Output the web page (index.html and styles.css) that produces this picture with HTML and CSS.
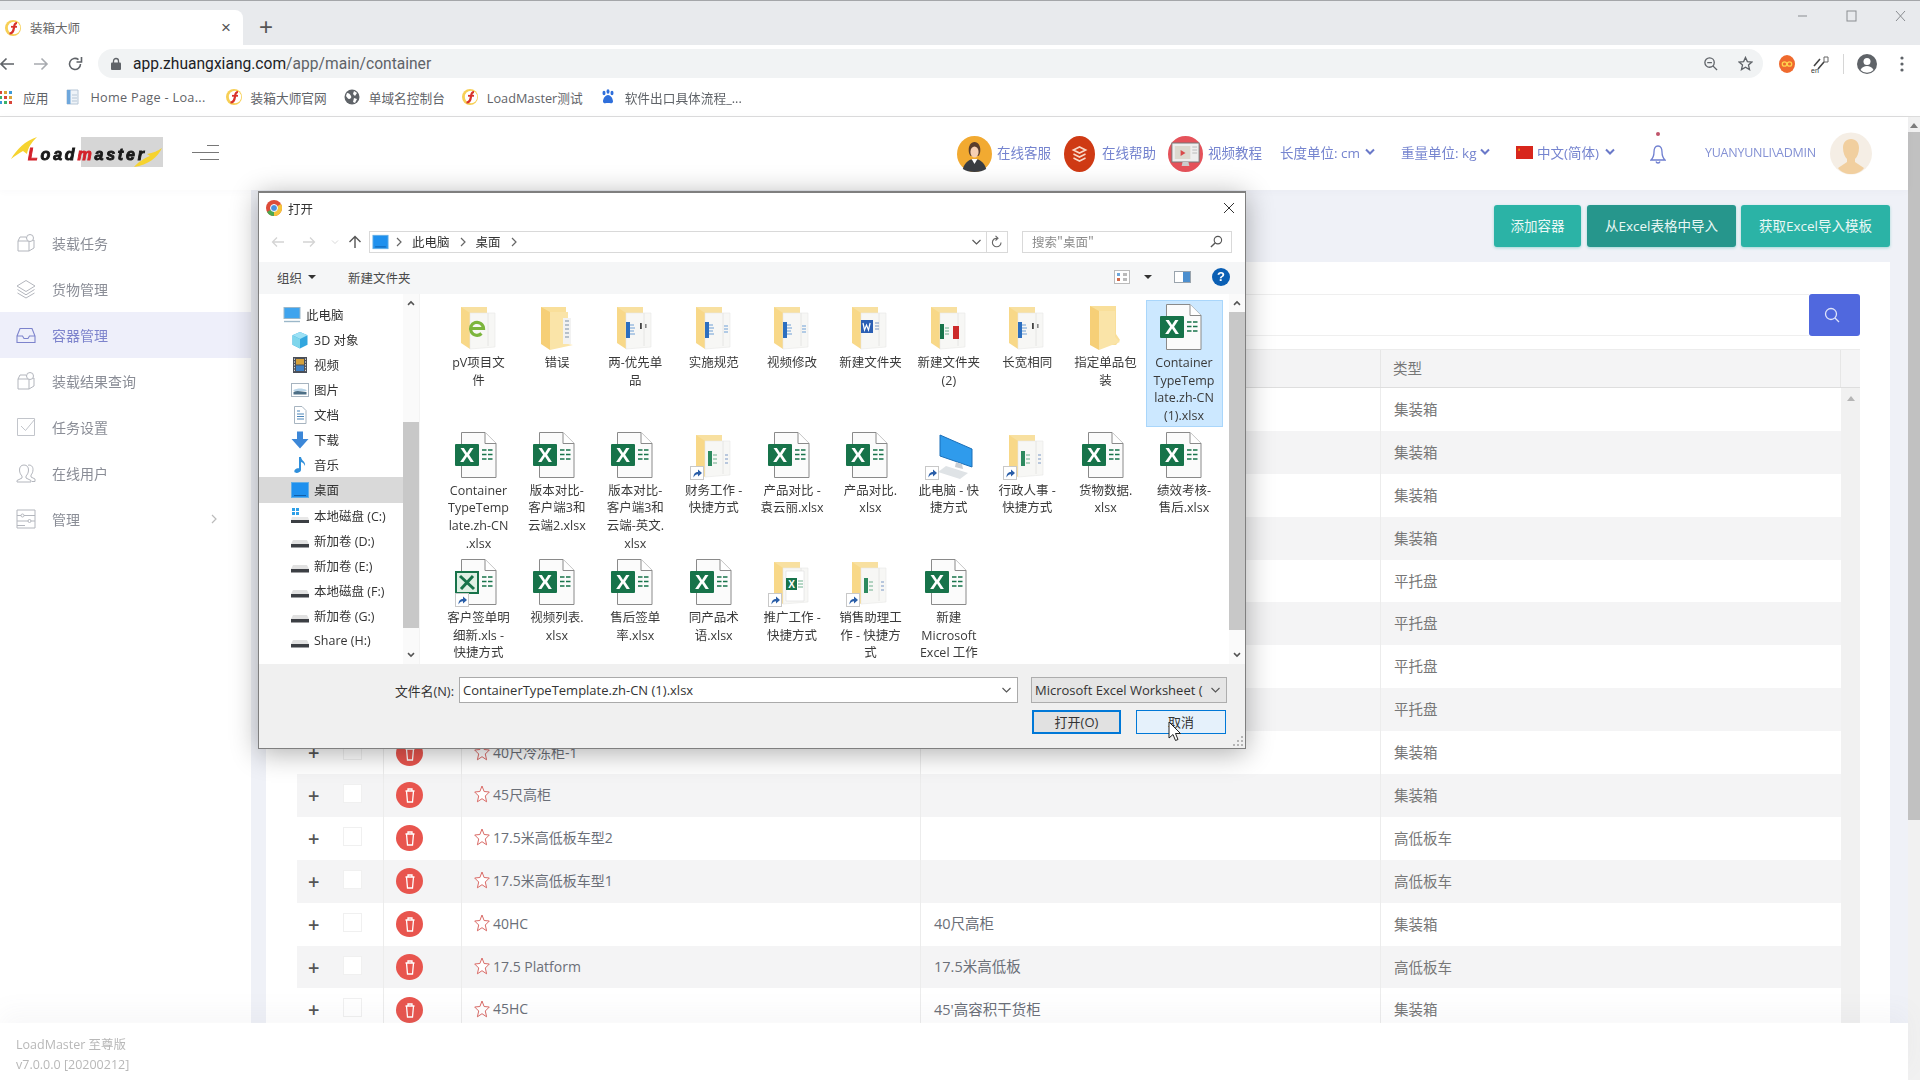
FILE: index.html
```html
<!DOCTYPE html>
<html lang="zh-CN">
<head>
<meta charset="utf-8">
<title>装箱大师</title>
<link rel="stylesheet" href="styles.css">
</head>
<body>
<svg class="defs" width="0" height="0" aria-hidden="true">
  <defs>
    <symbol id="fav" viewBox="0 0 16 16"><circle cx="8" cy="8" r="8" fill="#f7cf55"/><circle cx="9" cy="8" r="6.200" fill="#fff"/><path d="M12 3C9.300 3 9.300 5 9 7.500 8.600 11 7.500 13.500 4.500 13.500" fill="none" stroke="#d8322a" stroke-width="2.200"/><path d="M6 6.800h6" stroke="#d8322a" stroke-width="1.800"/></symbol>
    <symbol id="excel" viewBox="0 0 48 48"><path d="M6.500.5H30L41 11.500V45.500H6.500Z" fill="#fbfbfb" stroke="#8a8a8a"/><path d="M30 .5V11.500H41" fill="#fff" stroke="#8a8a8a"/><rect y="12" width="24" height="22" rx="1" fill="#17734a"/><text x="12" y="30" class="xl-x">X</text><path d="M27 18h4.500M33 18h4.500M27 22.500h4.500M33 22.500h4.500M27 27h4.500M33 27h4.500" stroke="#17734a" stroke-width="1.700"/></symbol>
    <symbol id="xls-old" viewBox="0 0 48 48"><path d="M6.500.5H30L41 11.500V45.500H6.500Z" fill="#fbfbfb" stroke="#8a8a8a"/><path d="M30 .5V11.500H41" fill="#fff" stroke="#8a8a8a"/><rect x="1" y="13" width="22" height="21" fill="#dff0e4" stroke="#17734a" stroke-width="2"/><path d="M5 17l14 13M18 17L6 30" stroke="#17734a" stroke-width="3"/><path d="M27 18h4.500M33 18h4.500M27 22.500h4.500M33 22.500h4.500M27 27h4.500M33 27h4.500" stroke="#17734a" stroke-width="1.700"/></symbol>
    <symbol id="folder" viewBox="0 0 48 48"><path d="M6 3H32V12H6Z" fill="#f8e0a0"/><path d="M6 3L15 9V45L6 39Z" fill="#f8d888"/><path d="M15 9H40V43L15 45Z" fill="#f7f7f5" stroke="#e8e8e6" stroke-width=".6"/><path d="M33 9v33" stroke="#e6e6e4"/></symbol>
    <symbol id="f-plain" viewBox="0 0 48 48"><path d="M8 2H34V30L38 36 34 41H8Z" fill="#f9df9a"/><path d="M8 2L17 7V46L8 41Z" fill="#f6cf77"/><path d="M17 7H33V33L38 38 17 46Z" fill="#fae4a8"/></symbol>
    <symbol id="f-doc" viewBox="0 0 48 48"><path d="M8 3H33V12H8Z" fill="#f9df9a"/><path d="M8 3L17 8V46L8 40Z" fill="#f6cf77"/><path d="M17 8H35V40L40 41 17 46Z" fill="#fae4a8"/><path d="M30 14H38V40H30Z" fill="#f2f2f2"/><path d="M32 17h4M32 21h4M32 25h4M32 29h4M32 33h4" stroke="#7b8ea3"/></symbol>
    <symbol id="f-e" viewBox="0 0 48 48"><use href="#folder"/><path d="M15.500 24.500h13a6.500 6.500 0 1 0-2 5" fill="none" stroke="#7cb53d" stroke-width="3.200"/></symbol>
    <symbol id="f-blue" viewBox="0 0 48 48"><use href="#folder"/><rect x="15" y="18" width="4" height="16" fill="#2c6fc0"/><path d="M19 21h4M19 24h5M19 27h4M19 30h5" stroke="#6f9fd6" stroke-width="1.200"/><path d="M34 22h4M34 25h4M34 28h4" stroke="#6f9fd6" stroke-width="1.200"/></symbol>
    <symbol id="f-blue2" viewBox="0 0 48 48"><use href="#folder"/><rect x="15" y="18" width="4" height="16" fill="#2c6fc0"/><path d="M19 21h4M19 24h5M19 27h4M19 30h5" stroke="#6f9fd6" stroke-width="1.200"/><rect x="29" y="19" width="1.800" height="6" fill="#444"/><rect x="34" y="20" width="1.600" height="4" fill="#888"/></symbol>
    <symbol id="f-word" viewBox="0 0 48 48"><use href="#folder"/><rect x="15" y="16" width="12" height="13" fill="#2b5fb4"/><path d="M17 19l1.500 7 2-5 2 5 1.600-7" fill="none" stroke="#fff" stroke-width="1.200"/><path d="M29 19h4M29 22h4M29 25h4" stroke="#7b98c6" stroke-width="1.200"/></symbol>
    <symbol id="f-gr" viewBox="0 0 48 48"><use href="#folder"/><rect x="15" y="20" width="4" height="15" fill="#17734a"/><path d="M20 24h4M20 27h4M20 30h4" stroke="#6fb08e" stroke-width="1.200"/><rect x="28" y="22" width="6" height="13" fill="#cc2a2a"/></symbol>
    <symbol id="f-green" viewBox="0 0 48 48"><use href="#folder"/><rect x="18" y="19" width="4" height="15" fill="#2d8a5f"/><path d="M23 23h4M23 27h4M23 31h4" stroke="#6fb08e" stroke-width="1.200"/><path d="M35 23h3M35 27h3M35 31h3" stroke="#7b98c6" stroke-width="1.200"/></symbol>
    <symbol id="f-x" viewBox="0 0 48 48"><use href="#folder"/><path d="M18 12H36V42H18Z" fill="#fff" stroke="#ddd" stroke-width=".6"/><rect x="18" y="19" width="11" height="12" fill="#17734a"/><text x="23.500" y="29" class="xl-xs">X</text><path d="M30 22h5M30 25h5M30 28h5" stroke="#6fb08e" stroke-width="1.200"/></symbol>
    <symbol id="shortcut" viewBox="0 0 14 14"><rect x=".5" y=".5" width="13" height="13" fill="#fff" stroke="#c8c8c8"/><path d="M3.500 11.500C3.500 7.500 5.500 6 8 6V3.500l4 3.500-4 3.500V8.200C6 8.200 4.800 9 3.500 11.500Z" fill="#2a5ea8"/></symbol>
    <symbol id="pc-big" viewBox="0 0 48 48"><path d="M15 3L47 17V35L15 24Z" fill="#2f9bec" stroke="#1a6fb8"/><path d="M31 30l6 2 1 5-8-2Z" fill="#c9ced4"/><path d="M21 34l22 7-8 6-22-7Z" fill="#dfe3e6"/></symbol>
    <symbol id="n-pc" viewBox="0 0 18 18"><rect x="1" y="1.500" width="16" height="11" fill="#3fa4ee" stroke="#9bb7c9"/><path d="M1 15.500h16" stroke="#9bb7c9" stroke-width="1.400"/></symbol>
    <symbol id="n-3d" viewBox="0 0 18 18"><path d="M9 1l7.500 3.300v9.500L9 17.500 1.500 13.800V4.300Z" fill="#31a6de"/><path d="M9 1l7.500 3.300L9 8 1.500 4.300Z" fill="#9ce1f5"/><path d="M1.500 4.300L9 8v9.500L1.500 13.800Z" fill="#7fd6ec"/></symbol>
    <symbol id="n-video" viewBox="0 0 18 18"><rect x="2" y="1" width="14" height="16" fill="#4a4f58"/><rect x="5" y="3" width="8" height="5.500" fill="#d5a13b"/><rect x="5" y="9.500" width="8" height="5.500" fill="#3d7fc4"/><path d="M3.500 2.500v13M14.500 2.500v13" stroke="#d8d8d8" stroke-dasharray="1.400 1.400"/></symbol>
    <symbol id="n-pic" viewBox="0 0 18 18"><rect x=".5" y="2.500" width="17" height="13" fill="#fff" stroke="#a7b4c0"/><path d="M2.500 9c4-2 9-2 13 0v1h-13Z" fill="#b8d4e8"/><path d="M2.500 11c4-2 9 0 13 0v2.500h-13Z" fill="#4d6f86"/></symbol>
    <symbol id="n-doc" viewBox="0 0 18 18"><path d="M3.500.5H11L15 4.500V17.500H3.500Z" fill="#fff" stroke="#a7b4c0"/><path d="M6 5h3M6 8h7M6 10.500h7M6 13h7" stroke="#4b84b8"/></symbol>
    <symbol id="n-down" viewBox="0 0 18 18"><path d="M6 .5h6V8h5.500L9 17.500.5 8H6Z" fill="#3c87d8"/></symbol>
    <symbol id="n-music" viewBox="0 0 18 18"><path d="M8 1h2c.5 4 5 4.500 4 9-.8-2.500-2.300-3.500-4-4V14c0 2.500-5.500 4-6.500 2-.8-2 1.500-4 4.500-3.800Z" fill="#2f8fdb"/></symbol>
    <symbol id="n-desk" viewBox="0 0 18 18"><rect x=".5" y="1.500" width="17" height="15" fill="#1e90ee" stroke="#62aee6"/><path d="M3 14.500h12" stroke="#0f5ea8"/></symbol>
    <symbol id="n-win" viewBox="0 0 18 18"><path d="M1 11h16l1 3v3H0v-3Z" fill="#e8e8e8"/><rect y="14" width="18" height="3" fill="#3c3f44"/><path d="M1 2h3v3H1ZM5 2h3v3H5ZM1 6h3v3H1ZM5 6h3v3H5Z" fill="#2fa0e8"/></symbol>
    <symbol id="n-drive" viewBox="0 0 18 18"><path d="M2 9h14l2 4v3H0v-3Z" fill="#e1e1e1"/><rect y="13" width="18" height="3.500" fill="#3c3f44"/></symbol>
    <symbol id="s-box" viewBox="0 0 20 20"><path d="M2 8h11v10H2ZM2 8l2-4h6l3 4M13 18l5-3V7l-5 1" fill="none" stroke="#b3b6bd"/><circle cx="14" cy="5" r="3.500" fill="#fff" stroke="#b3b6bd"/></symbol>
    <symbol id="s-layers" viewBox="0 0 20 20"><path d="M10 1.500L19 7l-9 5.500L1 7Z M1.500 10.500L10 15.800l8.500-5.300M1.500 14L10 19l8.500-5" fill="none" stroke="#b3b6bd"/></symbol>
    <symbol id="s-inbox" viewBox="0 0 20 20"><path d="M1 11l3-7.500h12l3 7.500v6.500H1ZM1 11h5.500l1.500 2.500h4l1.500-2.500H19" fill="none" stroke="#7d83cc" stroke-width="1.100"/></symbol>
    <symbol id="s-check" viewBox="0 0 20 20"><path d="M1.500 1.500h17v17h-17Z" fill="none" stroke="#c2c5cb"/><path d="M5 9l4.500 4.500L19 2" fill="none" stroke="#c2c5cb"/></symbol>
    <symbol id="s-users" viewBox="0 0 20 20"><path d="M8 2c3 0 4.500 2 4.500 5s-1.500 5-2.500 6v2l5 2.500v1.500H1v-1.500L6 15v-2C5 12 3.500 10 3.500 7S5 2 8 2ZM12 2.200C15 1.500 17 3.500 17 6.500c0 2.500-1 4.500-2 5.500v2l4 2v2.500h-3" fill="none" stroke="#b3b6bd"/></symbol>
    <symbol id="s-sliders" viewBox="0 0 20 20"><path d="M1 1h18v18H1ZM1 6.500h4M8 6.500h11M1 12h11M15 12h4M1 16.500h8" fill="none" stroke="#b3b6bd"/><circle cx="6.500" cy="6.500" r="1.500" fill="none" stroke="#b3b6bd"/><circle cx="13.500" cy="12" r="1.500" fill="none" stroke="#b3b6bd"/></symbol>
    <symbol id="chev" viewBox="0 0 10 8"><path d="M1 1.500l4 4 4-4" fill="none" stroke="currentColor" stroke-width="2"/></symbol>
    <symbol id="chev-thin" viewBox="0 0 10 8"><path d="M1 2l4 4 4-4" fill="none" stroke="currentColor" stroke-width="1.100"/></symbol>
    <symbol id="crumb" viewBox="0 0 6 10"><path d="M1 1l4 4-4 4" fill="none" stroke="#666" stroke-width="1.200"/></symbol>
    <symbol id="star" viewBox="0 0 16 18"><path d="M8 1l2.100 5.500 5.200.5-4 4 1.300 5.800L8 13.700l-4.600 3.100 1.300-5.800-4-4 5.200-.5Z" fill="#fff" stroke="#d96a66"/></symbol>
    <symbol id="trash" viewBox="0 0 12 16"><path d="M1.500 4h9M4 4V2h4v2M2.500 4l1 11h5l1-11" fill="none" stroke="#fff" stroke-width="1.300"/></symbol>
  </defs>
</svg>

<header class="chrome">
  <div class="tabstrip">
    <div class="tab">
      <svg class="ico16"><use href="#fav"/></svg>
      <span class="tab-title">装箱大师</span>
      <span class="tab-close">×</span>
    </div>
    <span class="newtab">+</span>
    <div class="winctl">
      <svg class="win-btn" viewBox="0 0 49 14"><path d="M20 7h9" stroke="#8a8d91"/></svg>
      <svg class="win-btn" viewBox="0 0 49 14"><rect x="20" y="2" width="9" height="10" fill="none" stroke="#8a8d91"/></svg>
      <svg class="win-btn" viewBox="0 0 49 14"><path d="M20 2l9 10M29 2l-9 10" stroke="#8a8d91"/></svg>
    </div>
  </div>
  <div class="toolbar">
    <div class="navbtns">
      <svg class="nav-ic" viewBox="0 0 16 16"><path d="M15 8H2M7.500 2.500L2 8l5.500 5.500" fill="none" stroke="#5f6368" stroke-width="1.600"/></svg>
      <svg class="nav-ic" viewBox="0 0 16 16"><path d="M1 8h13M8.500 2.500L14 8l-5.500 5.500" fill="none" stroke="#a8abb0" stroke-width="1.600"/></svg>
      <svg class="nav-ic" viewBox="0 0 16 16"><path d="M13.500 8A5.500 5.500 0 1 1 11.500 3.700M9.500 6h5V1" fill="none" stroke="#5f6368" stroke-width="1.600"/></svg>
    </div>
    <div class="omnibox">
      <svg class="lock" viewBox="0 0 10 13"><path d="M2.500 6V4a2.500 2.500 0 0 1 5 0v2" fill="none" stroke="#5f6368" stroke-width="1.300"/><rect y="5.500" width="10" height="7.500" rx="1" fill="#5f6368"/></svg>
      <span class="url"><b>app.zhuangxiang.com</b>/app/main/container</span>
      <svg class="omni-ic omni-zoom" viewBox="0 0 16 16"><circle cx="7" cy="7" r="5" fill="none" stroke="#5f6368" stroke-width="1.400"/><path d="M10.500 10.500L15 15M4.500 7h5" stroke="#5f6368" stroke-width="1.400"/></svg>
      <svg class="omni-ic" viewBox="0 0 16 16"><path d="M8 1.500l2 4.500 4.800.5-3.600 3.200 1.100 4.800L8 12l-4.300 2.500 1.100-4.800L1.200 6.500 6 6Z" fill="none" stroke="#5f6368" stroke-width="1.400"/></svg>
    </div>
    <div class="exts">
      <svg class="ext-a" viewBox="0 0 16 18"><ellipse cx="8" cy="9" rx="8" ry="9" fill="#ef6a2e"/><circle cx="5.500" cy="9" r="2.200" fill="none" stroke="#ffd34d" stroke-width="1.300"/><circle cx="10.500" cy="9" r="2.200" fill="none" stroke="#ffd34d" stroke-width="1.300"/></svg>
      <svg class="ext-b" viewBox="0 0 18 18"><path d="M3 11l6-7M7 14l6-7" stroke="#444" stroke-width="1.600"/><path d="M13 2h4v5h-4Z" fill="none" stroke="#666"/><text x="0" y="18" class="ext-t">en</text></svg>
      <span class="ext-sep"></span>
      <svg class="profile" viewBox="0 0 20 20"><circle cx="10" cy="10" r="10" fill="#5f6368"/><circle cx="10" cy="7.500" r="3.500" fill="#fff"/><path d="M3.500 16c1.500-3 4-4 6.500-4s5 1 6.500 4a9 9 0 0 1-13 0Z" fill="#fff"/></svg>
      <svg class="dots" viewBox="0 0 4 16"><circle cx="2" cy="2" r="1.600" fill="#5f6368"/><circle cx="2" cy="8" r="1.600" fill="#5f6368"/><circle cx="2" cy="14" r="1.600" fill="#5f6368"/></svg>
    </div>
  </div>
  <div class="bookmarks">
    <svg class="bm-grid" viewBox="0 0 14 14"><path d="M1 1h3v3H1Z" fill="#d9453a"/><path d="M6 1h3v3H6Z" fill="#d9a53a"/><path d="M11 1h3v3h-3Z" fill="#3a9ad9"/><path d="M1 6h3v3H1Z" fill="#3ab26b"/><path d="M6 6h3v3H6Z" fill="#d9453a"/><path d="M11 6h3v3h-3Z" fill="#d9a53a"/><path d="M1 11h3v3H1Z" fill="#3a9ad9"/><path d="M6 11h3v3H6Z" fill="#3ab26b"/><path d="M11 11h3v3h-3Z" fill="#d9453a"/></svg>
    <span class="bm bm-apps">应用</span>
    <span class="bm bm-home"><svg class="ico16" viewBox="0 0 16 16"><path d="M2 1h11v14H2Z" fill="#eef3f8" stroke="#b7c6d6"/><rect x="2" y="1" width="3.500" height="14" fill="#6ea7dc"/><path d="M7 6h5M7 9h5M7 12h5" stroke="#b7c6d6"/></svg>Home Page - Loa...</span>
    <span class="bm bm-first"><svg class="ico16"><use href="#fav"/></svg>装箱大师官网</span>
    <span class="bm"><svg class="ico16" viewBox="0 0 16 16"><circle cx="8" cy="8" r="7.500" fill="#5f6368"/><path d="M3 4c2 0 3 1 4 3s-1 3-2 3-2-2-3-3ZM10 2l3 2-2 3-2-2ZM10 9l3 1-2 4-2-1Z" fill="#fff"/></svg>单域名控制台</span>
    <span class="bm"><svg class="ico16"><use href="#fav"/></svg>LoadMaster测试</span>
    <span class="bm"><svg class="ico16" viewBox="0 0 16 16"><g fill="#2f6fdb"><ellipse cx="4" cy="4" rx="1.500" ry="2.200"/><ellipse cx="8" cy="2.500" rx="1.500" ry="2.200"/><ellipse cx="12" cy="4" rx="1.500" ry="2.200"/><path d="M8 6c-3 0-5 4-5 6.500C3 15 6 14 8 14s5 1 5-1.500C13 10 11 6 8 6Z"/></g></svg>软件出口具体流程_...</span>
  </div>
</header>

<div class="app">
  <div class="page">
    <div class="app-header">
      <svg class="logo" viewBox="0 0 155 34" role="img" aria-label="Loadmaster">
        <rect x="71" y="1" width="82" height="30" fill="#d6d6d6"/>
        <path d="M1 23C7 13 15 5 27 1 21 7 18 12 17 18L13 15C9 17 5 20 1 23Z" fill="#f6d32f"/>
        <path d="M124 31C128 26 135 22 140 20L137 18C143 17 148 15 152 12 148 21 138 29 124 31Z" fill="#f6d32f"/>
        <text x="18" y="23.500" class="logo-t"><tspan class="logo-r">L</tspan>oad<tspan class="logo-r">m</tspan>aster</text>
      </svg>
      <svg class="burger" viewBox="0 0 27 16"><path d="M15 .5h12M0 7.500h27M8 14.500h19" stroke="#777"/></svg>
      <div class="hd-right">
        <svg class="hd-ic" viewBox="0 0 36 36" preserveAspectRatio="none"><circle cx="18" cy="18" r="18" fill="#f2aa31"/><path d="M18 6c-4 0-6 4-6 8 0 3 1 5 2 6h8c1-1 2-3 2-6 0-4-2-8-6-8Z" fill="#5a3d2c"/><ellipse cx="18" cy="16" rx="4.200" ry="5.500" fill="#f6cfb4"/><path d="M6 33c2-7 7-10 12-10s10 3 12 10c-3 2-7 3-12 3S9 35 6 33Z" fill="#3a3d42"/><path d="M15 23h6l-3 5Z" fill="#fff"/></svg>
        <span class="hd-link hd-m5">在线客服</span>
        <svg class="hd-ic hd-ic-n" viewBox="0 0 36 36" preserveAspectRatio="none"><circle cx="18" cy="18" r="18" fill="#cf3a14"/><path d="M11 14l7-3 7 3-7 3ZM11 18l7 3 7-3M11 22l7 3 7-3" fill="none" stroke="#f9d9c8" stroke-width="1.800"/></svg>
        <span class="hd-link hd-m7">在线帮助</span>
        <svg class="hd-ic hd-m12" viewBox="0 0 36 36" preserveAspectRatio="none"><circle cx="18" cy="18" r="18" fill="#e5525a"/><rect x="4" y="7" width="28" height="19" fill="#eee" stroke="#777"/><rect x="7" y="10" width="16" height="13" fill="#dcd9cf"/><path d="M13 14l5 3-5 3Z" fill="#d84a4a"/><path d="M25 11h5M25 14h5M25 17h5" stroke="#bbb"/><path d="M15 26h6l1 4h-8Z" fill="#ccc"/></svg>
        <span class="hd-link hd-m5">视频教程</span>
        <span class="hd-link hd-m18 w-len">长度单位: cm<svg class="chev"><use href="#chev"/></svg></span>
        <span class="hd-link hd-m26 w-wt">重量单位: kg<svg class="chev"><use href="#chev"/></svg></span>
        <span class="hd-link hd-m26 w-lang"><svg class="flag" viewBox="0 0 17 13"><rect width="17" height="13" fill="#d8261c"/><path d="M3 2l1 2.500H2.200Z" fill="#fc0"/></svg>中文(简体)<svg class="chev"><use href="#chev"/></svg></span>
        <span class="bell-wrap">
          <span class="bell-dot"></span>
          <svg class="bell" viewBox="0 0 16 20"><path d="M8 2C5 2 4 5 4 8c0 3-1 6-3 8h14c-2-2-3-5-3-8 0-3-1-6-4-6ZM6 17.500c.5 2 3.500 2 4 0" fill="none" stroke="#6f7fd0" stroke-width="1.300"/></svg>
        </span>
        <span class="hd-user">YUANYUNLI\ADMIN</span>
        <svg class="avatar" viewBox="0 0 42 43"><circle cx="21" cy="21.500" r="21" fill="#f5eee5"/><path d="M21 7c5 0 8 3.500 8 9 0 5-2 9-4 11v3l9 6c-3 4-8 6-13 6s-10-2-13-6l9-6v-3c-2-2-4-6-4-11 0-5.500 3-9 8-9Z" fill="#f1cf9f"/></svg>
      </div>
    </div>

    <div class="mid">
      <nav class="sidebar">
        <div class="side-item"><svg class="side-ic"><use href="#s-box"/></svg>装载任务</div>
        <div class="side-item"><svg class="side-ic"><use href="#s-layers"/></svg>货物管理</div>
        <div class="side-item is-active"><svg class="side-ic"><use href="#s-inbox"/></svg>容器管理</div>
        <div class="side-item"><svg class="side-ic"><use href="#s-box"/></svg>装载结果查询</div>
        <div class="side-item"><svg class="side-ic"><use href="#s-check"/></svg>任务设置</div>
        <div class="side-item"><svg class="side-ic"><use href="#s-users"/></svg>在线用户</div>
        <div class="side-item"><svg class="side-ic"><use href="#s-sliders"/></svg>管理<svg class="side-arrow" viewBox="0 0 6 10"><path d="M1 1l4 4-4 4" fill="none" stroke="#bbb" stroke-width="1.200"/></svg></div>
      </nav>
      <main class="content">
        <div class="actions">
          <button class="btn btn-w87">添加容器</button>
          <button class="btn btn-dark">从Excel表格中导入</button>
          <button class="btn">获取Excel导入模板</button>
        </div>
        <section class="card">
          <div class="searchrow">
            <div class="searchinput"></div>
            <div class="searchbtn"><svg viewBox="0 0 18 18"><circle cx="8" cy="8" r="5.500" fill="none" stroke="#dfe4fa" stroke-width="1.300"/><path d="M12 12l4 4" stroke="#dfe4fa" stroke-width="1.300"/></svg></div>
          </div>
          <div class="table">
            <div class="thead">
              <div class="cell"></div><div class="cell"></div><div class="cell"></div><div class="cell"></div><div class="cell cell-t">类型</div><div class="cell cell-end"></div>
            </div>
            <div class="tbody">
              <div class="rows">
                <div class="row"><div class="c-plus"></div><div class="c-del"></div><div class="c-name"></div><div class="c-desc"></div><div class="c-type">集装箱</div></div>
                <div class="row"><div class="c-plus"></div><div class="c-del"></div><div class="c-name"></div><div class="c-desc"></div><div class="c-type">集装箱</div></div>
                <div class="row"><div class="c-plus"></div><div class="c-del"></div><div class="c-name"></div><div class="c-desc"></div><div class="c-type">集装箱</div></div>
                <div class="row"><div class="c-plus"></div><div class="c-del"></div><div class="c-name"></div><div class="c-desc"></div><div class="c-type">集装箱</div></div>
                <div class="row"><div class="c-plus"></div><div class="c-del"></div><div class="c-name"></div><div class="c-desc"></div><div class="c-type">平托盘</div></div>
                <div class="row"><div class="c-plus"></div><div class="c-del"></div><div class="c-name"></div><div class="c-desc"></div><div class="c-type">平托盘</div></div>
                <div class="row"><div class="c-plus"></div><div class="c-del"></div><div class="c-name"></div><div class="c-desc"></div><div class="c-type">平托盘</div></div>
                <div class="row"><div class="c-plus"></div><div class="c-del"></div><div class="c-name"></div><div class="c-desc"></div><div class="c-type">平托盘</div></div>
                <div class="row"><div class="c-plus">+</div><div class="c-del"><span class="del"><svg><use href="#trash"/></svg></span></div><div class="c-name"><svg class="star"><use href="#star"/></svg>40尺冷冻柜-1</div><div class="c-desc"></div><div class="c-type">集装箱</div></div>
                <div class="row"><div class="c-plus">+</div><div class="c-del"><span class="del"><svg><use href="#trash"/></svg></span></div><div class="c-name"><svg class="star"><use href="#star"/></svg>45尺高柜</div><div class="c-desc"></div><div class="c-type">集装箱</div></div>
                <div class="row"><div class="c-plus">+</div><div class="c-del"><span class="del"><svg><use href="#trash"/></svg></span></div><div class="c-name"><svg class="star"><use href="#star"/></svg>17.5米高低板车型2</div><div class="c-desc"></div><div class="c-type">高低板车</div></div>
                <div class="row"><div class="c-plus">+</div><div class="c-del"><span class="del"><svg><use href="#trash"/></svg></span></div><div class="c-name"><svg class="star"><use href="#star"/></svg>17.5米高低板车型1</div><div class="c-desc"></div><div class="c-type">高低板车</div></div>
                <div class="row"><div class="c-plus">+</div><div class="c-del"><span class="del"><svg><use href="#trash"/></svg></span></div><div class="c-name"><svg class="star"><use href="#star"/></svg>40HC</div><div class="c-desc">40尺高柜</div><div class="c-type">集装箱</div></div>
                <div class="row"><div class="c-plus">+</div><div class="c-del"><span class="del"><svg><use href="#trash"/></svg></span></div><div class="c-name"><svg class="star"><use href="#star"/></svg>17.5 Platform</div><div class="c-desc">17.5米高低板</div><div class="c-type">高低板车</div></div>
                <div class="row"><div class="c-plus">+</div><div class="c-del"><span class="del"><svg><use href="#trash"/></svg></span></div><div class="c-name"><svg class="star"><use href="#star"/></svg>45HC</div><div class="c-desc">45'高容积干货柜</div><div class="c-type">集装箱</div></div>
              </div>
              <div class="tscroll"><span class="tscroll-up"></span></div>
            </div>
          </div>
        </section>
      </main>
    </div>

    <footer class="app-footer">
      <div>LoadMaster 至尊版</div>
      <div>v7.0.0.0 [20200212]</div>
    </footer>
  </div>
  <div class="pscroll">
    <span class="pscroll-up"></span>
    <span class="pscroll-thumb"></span>
  </div>
</div>

<div class="dialog">
  <div class="dlg-title">
    <svg class="ico16" viewBox="0 0 16 16"><circle cx="8" cy="8" r="8" fill="#dd4b39"/><path d="M8 8L1 12A8 8 0 0 0 8 16Z" fill="#4aa850"/><path d="M8 8L15 4A8 8 0 0 1 8 16Z" fill="#f5c33b"/><circle cx="8" cy="8" r="3.500" fill="#4a8fe0" stroke="#fff"/></svg>
    <span>打开</span>
    <svg class="dlg-close" viewBox="0 0 12 12"><path d="M1 1l10 10M11 1L1 11" stroke="#333" stroke-width="1"/></svg>
  </div>
  <div class="dlg-addr">
    <div class="dlg-nav">
      <svg viewBox="0 0 14 12"><path d="M13 6H2M6 1.500L1.500 6 6 10.500" fill="none" stroke="#d4d4d4" stroke-width="1.300"/></svg>
      <svg viewBox="0 0 14 12"><path d="M1 6h11M8 1.500L12.500 6 8 10.500" fill="none" stroke="#d4d4d4" stroke-width="1.300"/></svg>
      <svg class="nav-drop" viewBox="0 0 10 8"><path d="M1 2l4 4 4-4" fill="none" stroke="#d4d4d4" stroke-width="1.200"/></svg>
      <svg class="nav-up" viewBox="0 0 14 14"><path d="M7 13V2M1.500 7L7 1.500 12.500 7" fill="none" stroke="#555" stroke-width="1.400"/></svg>
    </div>
    <div class="addrbox">
      <svg class="addr-ic"><use href="#n-desk"/></svg>
      <svg class="crumb"><use href="#crumb"/></svg>
      <span>此电脑</span>
      <svg class="crumb"><use href="#crumb"/></svg>
      <span>桌面</span>
      <svg class="crumb"><use href="#crumb"/></svg>
      <svg class="addr-drop"><use href="#chev-thin"/></svg>
      <span class="addr-refresh"><svg viewBox="0 0 12 14"><path d="M10 7.500A4.300 4.300 0 1 1 6 3.200M4.500 .8L7 3.200 4.500 5.500" fill="none" stroke="#666" stroke-width="1.100"/></svg></span>
    </div>
    <div class="dlg-search">
      <span>搜索"桌面"</span>
      <svg viewBox="0 0 14 14"><circle cx="8.500" cy="5.500" r="4" fill="none" stroke="#555" stroke-width="1.200"/><path d="M5.500 8.500L1 13" stroke="#555" stroke-width="1.500"/></svg>
    </div>
  </div>
  <div class="dlg-tools">
    <span class="tool-org">组织<i class="caret"></i></span>
    <span class="tool-new">新建文件夹</span>
    <svg class="tool-view" viewBox="0 0 16 14"><rect x=".5" y=".5" width="15" height="13" fill="#fff" stroke="#bbb"/><path d="M3 3h3v3H3Z" fill="#6ea7dc"/><path d="M9 3h4v3H9Z" fill="#bbb"/><path d="M3 8h3v3H3Z" fill="#d06a4a"/><path d="M9 8h4v3H9Z" fill="#bbb"/></svg>
    <i class="caret caret-view"></i>
    <svg class="tool-pane" viewBox="0 0 17 12"><rect x=".5" y=".5" width="16" height="11" fill="#fff" stroke="#9aa4ad"/><rect x="9" y="1" width="7" height="10" fill="#4c8fcf"/></svg>
    <span class="help">?</span>
  </div>
  <div class="dlg-body">
    <div class="navpane">
      <div class="navlist">
        <div class="nav-row nav-root"><svg><use href="#n-pc"/></svg>此电脑</div>
        <div class="nav-row"><svg><use href="#n-3d"/></svg>3D 对象</div>
        <div class="nav-row"><svg><use href="#n-video"/></svg>视频</div>
        <div class="nav-row"><svg><use href="#n-pic"/></svg>图片</div>
        <div class="nav-row"><svg><use href="#n-doc"/></svg>文档</div>
        <div class="nav-row"><svg><use href="#n-down"/></svg>下载</div>
        <div class="nav-row"><svg><use href="#n-music"/></svg>音乐</div>
        <div class="nav-row is-sel"><svg><use href="#n-desk"/></svg>桌面</div>
        <div class="nav-row"><svg><use href="#n-win"/></svg>本地磁盘 (C:)</div>
        <div class="nav-row"><svg><use href="#n-drive"/></svg>新加卷 (D:)</div>
        <div class="nav-row"><svg><use href="#n-drive"/></svg>新加卷 (E:)</div>
        <div class="nav-row"><svg><use href="#n-drive"/></svg>本地磁盘 (F:)</div>
        <div class="nav-row"><svg><use href="#n-drive"/></svg>新加卷 (G:)</div>
        <div class="nav-row"><svg><use href="#n-drive"/></svg>Share (H:)</div>
      </div>
      <div class="vscroll vscroll-nav">
        <svg class="vs-arrow"><use href="#chev"/></svg>
        <span class="vs-thumb"></span>
        <svg class="vs-arrow vs-down"><use href="#chev"/></svg>
      </div>
    </div>
    <div class="files">
      <div class="file"><svg><use href="#f-e"/></svg><span>pV项目文<br>件</span></div>
      <div class="file"><svg><use href="#f-doc"/></svg><span>错误</span></div>
      <div class="file"><svg><use href="#f-blue2"/></svg><span>两-优先单<br>品</span></div>
      <div class="file"><svg><use href="#f-blue"/></svg><span>实施规范</span></div>
      <div class="file"><svg><use href="#f-blue"/></svg><span>视频修改</span></div>
      <div class="file"><svg><use href="#f-word"/></svg><span>新建文件夹</span></div>
      <div class="file"><svg><use href="#f-gr"/></svg><span>新建文件夹<br>(2)</span></div>
      <div class="file"><svg><use href="#f-blue2"/></svg><span>长宽相同</span></div>
      <div class="file"><svg><use href="#f-plain"/></svg><span>指定单品包<br>装</span></div>
      <div class="file is-sel"><svg><use href="#excel"/></svg><span>Container<br>TypeTemp<br>late.zh-CN<br>(1).xlsx</span></div>

      <div class="file"><svg><use href="#excel"/></svg><span>Container<br>TypeTemp<br>late.zh-CN<br>.xlsx</span></div>
      <div class="file"><svg><use href="#excel"/></svg><span>版本对比-<br>客户端3和<br>云端2.xlsx</span></div>
      <div class="file"><svg><use href="#excel"/></svg><span>版本对比-<br>客户端3和<br>云端-英文.<br>xlsx</span></div>
      <div class="file"><svg><use href="#f-green"/><use href="#shortcut" x="0" y="34" width="14" height="14"/></svg><span>财务工作 -<br>快捷方式</span></div>
      <div class="file"><svg><use href="#excel"/></svg><span>产品对比 -<br>袁云丽.xlsx</span></div>
      <div class="file"><svg><use href="#excel"/></svg><span>产品对比.<br>xlsx</span></div>
      <div class="file"><svg><use href="#pc-big"/><use href="#shortcut" x="0" y="34" width="14" height="14"/></svg><span>此电脑 - 快<br>捷方式</span></div>
      <div class="file"><svg><use href="#f-green"/><use href="#shortcut" x="0" y="34" width="14" height="14"/></svg><span>行政人事 -<br>快捷方式</span></div>
      <div class="file"><svg><use href="#excel"/></svg><span>货物数据.<br>xlsx</span></div>
      <div class="file"><svg><use href="#excel"/></svg><span>绩效考核-<br>售后.xlsx</span></div>

      <div class="file"><svg><use href="#xls-old"/><use href="#shortcut" x="0" y="34" width="14" height="14"/></svg><span>客户签单明<br>细新.xls -<br>快捷方式</span></div>
      <div class="file"><svg><use href="#excel"/></svg><span>视频列表.<br>xlsx</span></div>
      <div class="file"><svg><use href="#excel"/></svg><span>售后签单<br>率.xlsx</span></div>
      <div class="file"><svg><use href="#excel"/></svg><span>同产品术<br>语.xlsx</span></div>
      <div class="file"><svg><use href="#f-x"/><use href="#shortcut" x="0" y="34" width="14" height="14"/></svg><span>推广工作 -<br>快捷方式</span></div>
      <div class="file"><svg><use href="#f-green"/><use href="#shortcut" x="0" y="34" width="14" height="14"/></svg><span>销售助理工<br>作 - 快捷方<br>式</span></div>
      <div class="file"><svg><use href="#excel"/></svg><span>新建<br>Microsoft<br>Excel 工作</span></div>
    </div>
    <div class="vscroll vscroll-files">
      <svg class="vs-arrow"><use href="#chev"/></svg>
      <span class="vs-thumb"></span>
      <svg class="vs-arrow vs-down"><use href="#chev"/></svg>
    </div>
  </div>
  <div class="dlg-bottom">
    <div class="bot-row">
      <label class="fn-label">文件名(N):</label>
      <div class="fn-input"><span>ContainerTypeTemplate.zh-CN (1).xlsx</span><svg><use href="#chev-thin"/></svg></div>
      <div class="fn-type"><span>Microsoft Excel Worksheet (</span><svg><use href="#chev-thin"/></svg></div>
    </div>
    <div class="bot-row bot-btns">
      <button class="wbtn wbtn-open">打开(O)</button>
      <button class="wbtn wbtn-cancel">取消</button>
    </div>
  </div>
  <svg class="grip" viewBox="0 0 10 10"><g fill="#b5b5b5"><rect x="8" y="8" width="2" height="2"/><rect x="4" y="8" width="2" height="2"/><rect y="8" width="2" height="2"/><rect x="8" y="4" width="2" height="2"/><rect x="4" y="4" width="2" height="2"/><rect x="8" width="2" height="2"/></g></svg>
</div>
<svg class="cursor" viewBox="0 0 13 21"><path d="M1 1v16l4-3.500 2.500 6 2.500-1-2.500-6h5Z" fill="#fff" stroke="#222"/></svg>
</body>
</html>
```

FILE: styles.css
```css
* { box-sizing: border-box; }
html, body { margin: 0; height: 100%; }
body {
  width: 1920px; height: 1080px; overflow: hidden;
  display: flex; flex-direction: column;
  font-family: "Open Sans", "Noto Sans CJK SC", sans-serif;
  color: #666; background: #fff; position: relative;
  filter: blur(.4px);
}
svg { display: block; flex: none; }
.defs { position: absolute; }
.xl-x { font: bold 21px "Liberation Sans", sans-serif; fill: #fff; text-anchor: middle; }
.xl-xs { font: bold 10px "Liberation Sans", sans-serif; fill: #fff; text-anchor: middle; }
.ext-t { font: 7px "Liberation Sans", sans-serif; fill: #333; }
.logo-t { font: italic 900 16px "Liberation Sans", sans-serif; letter-spacing: 2.8px; fill: #1a1a1a; stroke: #1a1a1a; stroke-width: .9px; }
.logo-r { fill: #d3222a; stroke: #d3222a; }
.ico16 { width: 16px; height: 16px; }

/* browser chrome */
.chrome { flex: none; height: 117px; border-bottom: 1px solid #dcdcdc; }
.tabstrip { height: 45px; background: #e8eaed; border-top: 1px solid #a4a6a9; display: flex; align-items: flex-end; font-family: "Noto Sans CJK SC", sans-serif; }
.tab { width: 243px; height: 35px; background: #fff; border-radius: 0 8px 0 0; display: flex; align-items: center; padding: 0 8px 0 5px; font-size: 12.5px; color: #666; }
.tab-title { margin-left: 9px; }
.tab-close { margin-left: auto; margin-right: 4px; font-size: 17px; color: #555; font-family: "Liberation Sans", sans-serif; line-height: 1; }
.newtab { margin-left: 16px; align-self: center; font: 24px "Liberation Sans", sans-serif; color: #555; margin-top: 8px; }
.winctl { margin-left: auto; margin-right: -5px; align-self: flex-start; display: flex; margin-top: 8px; }
.win-btn { width: 49px; height: 14px; }
.toolbar { height: 37px; display: flex; align-items: flex-start; padding-top: 4px; background: #fff; }
.navbtns { width: 98px; height: 29px; display: flex; align-items: center; gap: 18px; margin-left: -1px; }
.nav-ic { width: 16px; height: 16px; }
.omnibox { width: 1665px; height: 29px; border-radius: 15px; background: #f1f3f4; display: flex; align-items: center; padding-left: 13px; padding-right: 10px; margin-left: 1px; }
.lock { width: 10px; height: 13px; }
.url { margin-left: 12px; font: 15.6px Roboto, sans-serif; color: #5f6368; }
.url b { font-weight: 400; color: #202124; }
.omni-ic { width: 15px; height: 15px; margin-left: 20px; }
.omni-zoom { margin-left: auto; }
.exts { flex: 1; height: 29px; display: flex; align-items: center; }
.ext-a { width: 16px; height: 18px; margin-left: 16px; }
.ext-b { width: 18px; height: 18px; margin-left: 16px; }
.ext-sep { width: 1px; height: 20px; background: #d6d6d6; margin-left: 14px; }
.profile { width: 20px; height: 20px; margin-left: 13px; }
.dots { width: 4px; height: 16px; margin-left: 23px; }
.bookmarks { height: 34px; padding-bottom: 4px; display: flex; align-items: center; background: #fff; font-size: 12.7px; color: #5f6368; }
.bm-grid { width: 14px; height: 14px; margin-left: -2px; }
.bm { display: flex; align-items: center; gap: 9px; margin-left: 17px; white-space: nowrap; }
.bm-apps { margin-left: 11px; }
.bm-home { margin-left: 17px; letter-spacing: .3px; }
.bm-first { margin-left: 20px; }

/* app */
.app { flex: 1; display: flex; min-height: 0; }
.page { flex: 1; display: flex; flex-direction: column; min-width: 0; }
.pscroll { width: 12px; background: #f1f1f1; display: flex; flex-direction: column; align-items: center; }
.pscroll-up { margin-top: 6px; border: 4px solid transparent; border-top: 0; border-bottom: 5px solid #7d7d7d; }
.pscroll-thumb { width: 100%; height: 688px; background: #c1c1c1; margin-top: 4px; }

.app-header { height: 73px; background: #fff; display: flex; align-items: center; padding-right: 36px; position: relative; z-index: 2; box-shadow: 0 1px 8px rgba(60,70,110,.03); }
.logo { width: 155px; height: 34px; margin-left: 10px; margin-top: -2px; }
.burger { width: 27px; height: 16px; margin-left: 27px; margin-top: -2px; }
.hd-right { margin-left: auto; display: flex; align-items: center; }
.hd-ic { width: 35px; height: 36px; }
.hd-ic-n { width: 31px; margin-left: 13px; }
.hd-link { display: flex; align-items: center; padding-bottom: 3px; font-size: 13.5px; color: #7584cf; white-space: nowrap; }
.hd-m5 { margin-left: 5px; }
.hd-m7 { margin-left: 7px; }
.hd-m12 { margin-left: 12px; }
.hd-m18 { margin-left: 18px; }
.hd-m26 { margin-left: 26px; }
.w-len { width: 95px; }
.w-wt { width: 89px; }
.w-lang { width: 99px; }
.chev { width: 10px; height: 8px; margin-left: auto; color: #6a79c9; }
.flag { width: 17px; height: 13px; margin-right: 4px; }
.bell-wrap { display: flex; flex-direction: column; align-items: center; margin-left: 35px; gap: 8px; margin-top: -12px; width: 16px; }
.bell-dot { width: 4px; height: 4px; border-radius: 50%; background: #c0546a; }
.bell { width: 16px; height: 20px; }
.hd-user { width: 113px; margin-left: 39px; padding-bottom: 2px; font-size: 12.5px; color: #8491d4; white-space: nowrap; letter-spacing: -.25px; }
.avatar { width: 42px; height: 43px; margin-left: 12px; }

.mid { flex: 1; display: flex; min-height: 0; overflow: hidden; }
.sidebar { width: 251px; flex: none; background: #fff; padding-top: 30px; }
.side-item { height: 46px; display: flex; align-items: center; padding-left: 16px; gap: 16px; font-size: 14px; color: #8a8d96; }
.side-item.is-active { background: #eeeffa; color: #7d83cc; }
.side-ic { width: 20px; height: 20px; }
.side-arrow { width: 6px; height: 10px; margin-left: auto; margin-right: 34px; }

.content { flex: 1; background: #eff1f7; padding: 15px 18px 0 15px; min-width: 0; display: flex; flex-direction: column; }
.actions { display: flex; justify-content: flex-end; gap: 5px; height: 42px; margin-bottom: 15px; flex: none; }
.btn { width: 149px; height: 42px; border: 0; border-radius: 3px; background: #2bb3a6; color: #eaf8f6; font: 13.5px "Open Sans", "Noto Sans CJK SC", sans-serif; padding: 0 0 3px; box-shadow: 0 1px 3px rgba(43,179,166,.4); white-space: nowrap; }
.btn-w87 { width: 87px; margin-right: 1px; }
.btn-dark { background: #26968c; }
.card { flex: 1; background: #fff; padding: 32px 30px 0 31px; min-height: 0; }
.searchrow { display: flex; height: 42px; margin-bottom: 13px; }
.searchinput { flex: 1; border: 1px solid #efefef; border-right: 0; }
.searchbtn { width: 51px; padding-right: 6px; background: #5068de; border-radius: 3px; display: flex; align-items: center; justify-content: center; }
.searchbtn svg { width: 18px; height: 18px; }
.table { display: flex; flex-direction: column; }
.thead { height: 39px; display: grid; grid-template-columns: 87px 78px 459px 460px 460px 19px; background: #f4f4f5; border-top: 1px solid #ececec; border-bottom: 1px solid #dedede; }
.cell { border-right: 1px solid #e6e6e6; }
.cell-t { display: flex; align-items: center; padding: 0 0 2px 12px; font-size: 14.5px; color: #777; }
.cell-end { border-right: 0; }
.tbody { display: flex; }
.rows { flex: 1; min-width: 0; }
.tscroll { width: 19px; background: #f1f1f1; display: flex; justify-content: center; align-self: stretch; }
.tscroll-up { margin-top: 8px; height: 0; border: 4px solid transparent; border-top: 0; border-bottom: 5px solid #b5b5b5; }
.row { height: 42.9px; display: grid; grid-template-columns: 87px 78px 459px 460px 460px; align-items: center; font-size: 14px; color: #6b6f78; background: #fff; }
.row:nth-child(even) { background: #f4f4f5; }
.row > div { height: 100%; display: flex; align-items: center; border-right: 1px solid #ececec; }
.row > div:last-child { border-right: 0; }
.c-plus { padding-left: 11px; font: 600 20px "Open Sans", sans-serif; color: #555; position: relative; }
.c-plus::after { content: ""; position: absolute; left: 46px; top: 10px; width: 17px; height: 17px; background: #fff; border: 1px solid #f0f0f0; }
.c-del { padding-left: 12px; }
.del { width: 27px; height: 26px; border-radius: 50%; background: #e8554e; display: flex; align-items: center; justify-content: center; }
.del svg { width: 12px; height: 16px; }
.c-name { padding: 0 0 2px 12px; white-space: nowrap; }
.star { width: 16px; height: 18px; margin-right: 3px; }
.row .c-desc { padding: 0 0 3px 13px; font-size: 14.5px; }
.row .c-type { padding: 0 0 2px 13px; font-size: 14.5px; color: #777; }

.app-footer { height: 57px; flex: none; background: #fff; padding: 12px 0 0 16px; font-size: 12.5px; line-height: 20px; color: #b8b8b8; position: relative; z-index: 2; box-shadow: 0 -12px 24px rgba(120,125,140,.05); }

/* file dialog */
.dialog { position: absolute; left: 258px; top: 191px; width: 988px; height: 558px; background: #fff; border: 1px solid #7f7f7f; border-top-width: 2px; display: flex; flex-direction: column; font-family: "Noto Sans CJK SC", sans-serif; font-size: 12.5px; color: #333; box-shadow: 0 4px 26px rgba(0,0,0,.32); z-index: 5; }
.dlg-title { height: 38px; padding-bottom: 8px; flex: none; display: flex; align-items: center; padding-left: 7px; gap: 6px; }
.dlg-close { width: 12px; height: 12px; margin-left: auto; margin-right: 10px; }
.dlg-addr { height: 31px; flex: none; display: flex; }
.dlg-nav { width: 110px; height: 22px; display: flex; align-items: center; padding-left: 12px; gap: 17px; flex: none; }
.dlg-nav svg { width: 14px; height: 12px; }
.dlg-nav .nav-drop { width: 8px; height: 6px; margin-left: -2px; margin-right: -8px; }
.dlg-nav .nav-up { height: 14px; }
.addrbox { width: 639px; height: 22px; border: 1px solid #d9d9d9; display: flex; align-items: center; padding: 0 0 1px 2px; color: #333; }
.addr-ic { width: 17px; height: 16px; margin-right: 7px; }
.crumb { width: 6px; height: 10px; margin: 0 10px 0 0; }
.addrbox span { margin-right: 10px; }
.addr-drop { width: 11px; height: 8px; margin-left: auto; margin-right: 4px; color: #555; }
.addrbox .addr-refresh { width: 21px; height: 20px; margin: 0; border-left: 1px solid #d9d9d9; display: flex; align-items: center; justify-content: center; }
.addr-refresh svg { width: 12px; height: 14px; }
.dlg-search { width: 210px; height: 22px; margin-left: 14px; border: 1px solid #d9d9d9; display: flex; align-items: center; padding: 0 8px 1px 9px; color: #8c8c8c; }
.dlg-search svg { width: 13px; height: 13px; margin-left: auto; }
.dlg-tools { height: 32px; flex: none; background: #f5f6f7; display: flex; align-items: center; padding: 0 0 2px 18px; color: #4a4a4a; }
.tool-org { display: flex; align-items: center; }
.caret { width: 0; height: 0; border: 4px solid transparent; border-top: 4px solid #333; border-bottom: 0; margin-left: 6px; }
.tool-new { margin-left: 32px; }
.tool-view { width: 16px; height: 14px; margin-left: auto; }
.caret-view { margin-left: 14px; }
.tool-pane { width: 17px; height: 12px; margin-left: 22px; }
.help { width: 18px; height: 18px; border-radius: 50%; background: #0a5fb4; color: #fff; font: bold 13px/18px "Liberation Sans", sans-serif; text-align: center; margin-left: 21px; margin-right: 15px; }
.dlg-body { flex: none; height: 370px; display: flex; overflow: hidden; }
.navpane { width: 161px; flex: none; display: flex; border-right: 1px solid #f3f3f3; }
.navlist { width: 145px; padding-top: 8px; }
.nav-row { height: 25.07px; display: flex; align-items: center; padding-left: 32px; gap: 5px; color: #333; white-space: nowrap; font-family: "Open Sans", "Noto Sans CJK SC", sans-serif; font-size: 12.5px; }
.nav-row svg { width: 18px; height: 18px; }
.nav-root { padding-left: 24px; }
.nav-row.is-sel { background: #d9d9d9; }
.vscroll { width: 16px; display: flex; flex-direction: column; align-items: center; background: #fafafa; color: #555; }
.vs-arrow { width: 8px; height: 6px; margin-top: 6px; transform: scaleY(-1); }
.vs-down { margin-top: auto; margin-bottom: 6px; transform: none; }
.vs-thumb { width: 100%; background: #c8c8c8; }
.vscroll-nav .vs-thumb { height: 206px; margin-top: 116px; }
.vscroll-files .vs-thumb { height: 318px; margin-top: 6px; }
.files { flex: 1; min-width: 0; display: grid; grid-template-columns: repeat(10, 77px); grid-auto-rows: 127.5px; column-gap: 1.4px; padding: 6px 0 0 20px; overflow: hidden; font-family: "Open Sans", "Noto Sans CJK SC", sans-serif; font-size: 12.5px; line-height: 17.7px; color: #3a3a3a; text-align: center; }
.file { border: 1px solid transparent; padding: 3px 0; display: flex; flex-direction: column; align-items: center; align-self: start; white-space: nowrap; }
.file > svg { width: 48px; height: 48px; overflow: visible; }
.file > span { margin-top: 2px; }
.file.is-sel { background: #cce8ff; border-color: #a9d6fb; padding-bottom: 1px; }
.dlg-bottom { flex: 1; background: #f0f0f0; padding-top: 13px; display: flex; flex-direction: column; gap: 7px; }
.bot-row { display: flex; justify-content: flex-end; align-items: center; padding-right: 18px; }
.fn-label { margin-right: 5px; font-family: "Open Sans", "Noto Sans CJK SC", sans-serif; font-size: 12.8px; }
.fn-input { width: 559px; height: 26px; background: #fff; border: 1px solid #aaa; display: flex; align-items: center; padding: 0 5px 0 3px; font-family: "Open Sans", "Noto Sans CJK SC", sans-serif; font-size: 13px; color: #333; }
.fn-input svg, .fn-type svg { width: 11px; height: 8px; margin-left: auto; color: #555; }
.fn-type { width: 196px; height: 26px; margin-left: 13px; background: #e5e5e5; border: 1px solid #adadad; display: flex; align-items: center; padding: 0 5px 0 3px; font-family: "Open Sans", sans-serif; font-size: 13px; color: #333; white-space: nowrap; overflow: hidden; }
.bot-btns { gap: 15px; padding-right: 19px; }
.wbtn { height: 24px; padding: 0 0 2px; border: 2px solid #0078d7; font: 13px "Open Sans", "Noto Sans CJK SC", sans-serif; color: #333; }
.wbtn-open { width: 89px; background: #e1e1e1; }
.wbtn-cancel { width: 90px; background: #e5f1fb; border-width: 1px; }
.grip { position: absolute; right: 2px; bottom: 2px; width: 10px; height: 10px; }
.cursor { position: absolute; left: 1168px; top: 721px; width: 13px; height: 21px; z-index: 6; }
```
